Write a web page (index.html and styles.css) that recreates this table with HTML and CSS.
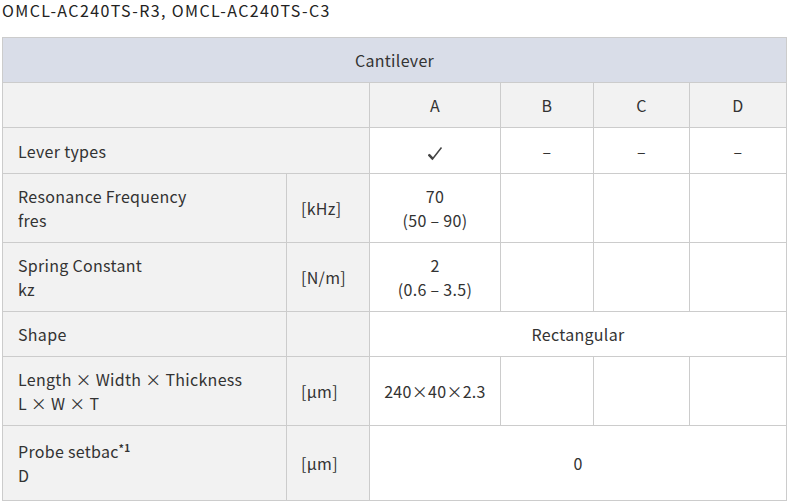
FILE: index.html
```html
<!DOCTYPE html>
<html lang="ja">
<head>
<meta charset="utf-8">
<link rel="stylesheet" href="styles.css">
</head>
<body>
<p class="title">OMCL-AC240TS-R3, OMCL-AC240TS-C3</p>
<table class="spec">
  <colgroup>
    <col class="c-label"><col class="c-unit"><col class="c-a"><col class="c-b"><col class="c-c"><col class="c-d">
  </colgroup>
  <tr class="r-head"><th colspan="6" class="head">Cantilever</th></tr>
  <tr class="r-one"><td colspan="2" class="lab"></td><td class="lab ctr">A</td><td class="lab ctr">B</td><td class="lab ctr">C</td><td class="lab ctr">D</td></tr>
  <tr class="r-one2"><td colspan="2" class="lab name">Lever types</td>
    <td class="ctr"><svg class="check" width="16" height="15" viewBox="0 0 16 15"><path d="M1.5 8.5 L5.5 13 L14.5 1.5" fill="none" stroke="#444" stroke-width="1.5" stroke-linejoin="miter"/><path d="M1.8 8.6 L5.6 12.6" stroke="#444" stroke-width="2.4"/></svg></td>
    <td class="ctr">–</td><td class="ctr">–</td><td class="ctr">–</td></tr>
  <tr class="r-two"><td class="lab name">Resonance Frequency<br><span class="sub">fres</span></td><td class="lab unit">[kHz]</td>
    <td class="ctr val">70<br>(50 – 90)</td><td></td><td></td><td></td></tr>
  <tr class="r-two"><td class="lab name">Spring Constant<br><span class="sub">kz</span></td><td class="lab unit">[N/m]</td>
    <td class="ctr val">2<br>(0.6 – 3.5)</td><td></td><td></td><td></td></tr>
  <tr class="r-one"><td class="lab name">Shape</td><td class="lab"></td><td colspan="4" class="ctr val">Rectangular</td></tr>
  <tr class="r-two"><td class="lab name">Length × Width × Thickness<br><span class="sub">L × W × T</span></td><td class="lab unit">[µm]</td>
    <td class="ctr val">240×40×2.3</td><td></td><td></td><td></td></tr>
  <tr class="r-last"><td class="lab name">Probe setbac<sup>*1</sup><br><span class="sub">D</span></td><td class="lab unit">[µm]</td>
    <td colspan="4" class="ctr val">0</td></tr>
</table>
</body>
</html>
```
FILE: styles.css
```css
html, body {
  margin: 0;
  padding: 0;
  background: #fff;
}
body {
  padding: 0 2px;
  font-family: "Noto Sans CJK JP", "Noto Sans", sans-serif;
  color: #333;
  font-size: 16px;
  letter-spacing: 0.3px;
}
.title {
  margin: 0 0 17px;
  font-size: 16px;
  line-height: 20px;
  letter-spacing: 1.4px;
  color: #222;
  white-space: nowrap;
}
.spec {
  border-collapse: collapse;
  table-layout: fixed;
  width: 785px;
}
.c-label { width: 284px; }
.c-unit { width: 83px; }
.c-a { width: 131px; }
.c-b { width: 93px; }
.c-c { width: 96px; }
.c-d { width: 97px; }
.spec th, .spec td {
  border: 1px solid #cccccc;
  padding: 0;
  font-weight: normal;
  line-height: 24px;
  vertical-align: middle;
}
.head {
  background: #d9dde8;
  height: 44px;
  text-align: center;
}
.lab { background: #f2f2f2; }
.ctr { text-align: center; }
.name { padding-left: 15px !important; text-align: left; }
.unit { padding-left: 14px !important; text-align: left; }
.r-one td { height: 44px; }
.r-one2 td { height: 45px; }
.r-two td { height: 68px; }
.r-last td { height: 74px; }
.check { vertical-align: middle; }
sup {
  font-size: 10px;
  font-weight: bold;
  line-height: 0;
  vertical-align: 6px;
}
```
